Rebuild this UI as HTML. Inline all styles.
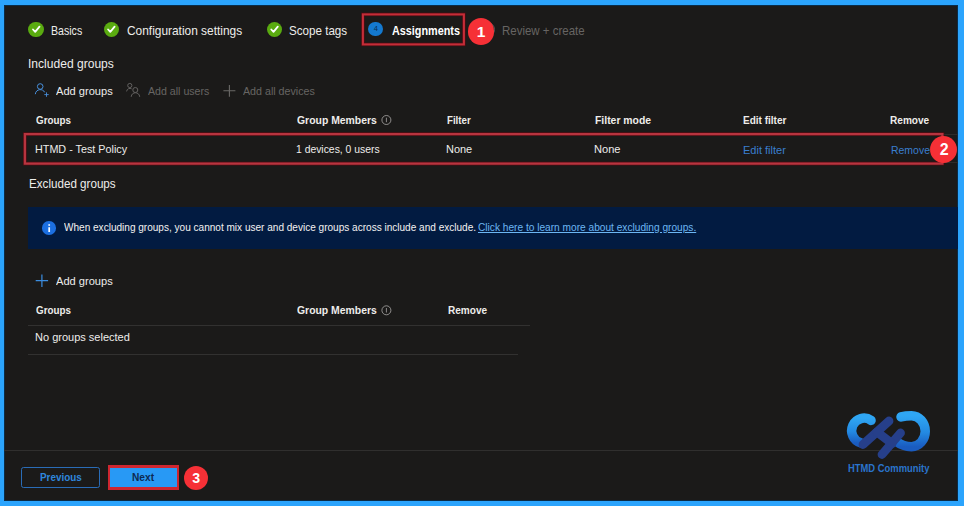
<!DOCTYPE html>
<html><head><meta charset="utf-8">
<style>
html,body{margin:0;padding:0;}
body{width:964px;height:506px;background:#2ba4fd;position:relative;overflow:hidden;font-family:"Liberation Sans",sans-serif;color:#fff;}
#p{position:absolute;left:4px;top:5px;width:954px;height:496px;background:#1b1a19;box-shadow:inset 0 0 0 1px #0a2c48;}
.t{position:absolute;white-space:nowrap;line-height:16px;transform-origin:0 0;}
.ck{position:absolute;width:15.2px;height:15.2px;border-radius:50%;background:#5aab10;}
.rc{position:absolute;border-radius:50%;background:#f63036;color:#fff;font-weight:bold;font-size:14.5px;text-align:center;}
.rb{position:absolute;border:2px solid #d9212d;box-sizing:border-box;}
.hl{position:absolute;height:1px;background:#323130;}
svg{position:absolute;overflow:visible;}
</style></head><body>
<div id="p"></div>

<!-- step checks -->
<div class="ck" style="left:28.4px;top:21.6px"></div>
<div class="ck" style="left:103.5px;top:21.6px"></div>
<div class="ck" style="left:266.7px;top:21.6px"></div>
<svg style="left:0;top:0" width="964" height="506" viewBox="0 0 964 506">
 <g fill="none" stroke="#fff" stroke-width="1.8" stroke-linecap="round" stroke-linejoin="round">
  <path d="M33 29.5 L35.2 31.8 L39.5 26.7"/>
  <path d="M108.1 29.5 L110.3 31.8 L114.6 26.7"/>
  <path d="M271.3 29.5 L273.5 31.8 L277.8 26.7"/>
 </g>
 <!-- add person icon -->
 <g fill="none" stroke="#4890dc" stroke-width="1">
  <circle cx="40.2" cy="86.5" r="2.8"/>
  <path d="M35.3 94.2 C35.8 88.6 43.2 88.4 44.6 92.3"/>
  <path d="M46.5 92.4 V96.8 M44.3 94.6 H48.7" stroke-width="0.9"/>
 </g>
 <!-- users icon -->
 <g fill="none" stroke="#636160" stroke-width="1">
  <circle cx="129.8" cy="85.5" r="2.1"/>
  <path d="M126.6 91.4 C126.9 88.6 129.8 87.8 131.6 88.8"/>
  <circle cx="135.3" cy="90" r="2.5"/>
  <path d="M131.2 96.8 C131.6 91.4 139.3 91.4 139.7 96.8"/>
 </g>
 <!-- plus gray -->
 <path d="M229.4 84.9 V96.8 M223.4 90.8 H235.4" stroke="#6a6866" stroke-width="1.1" fill="none"/>
 <!-- plus blue -->
 <path d="M41.9 274.5 V286.9 M35.7 280.7 H48.1" stroke="#3b8de0" stroke-width="1.2" fill="none"/>
 <!-- info outlined -->
 <g fill="none" stroke="#b4b2b0" stroke-width="0.75">
  <circle cx="386.4" cy="120" r="4.5"/><path d="M386.4 117.7 V122.2"/>
  <circle cx="386.4" cy="310.3" r="4.5"/><path d="M386.4 308 V312.5"/>
 </g>
</svg>

<!-- assignments step -->
<svg style="left:0;top:0" width="964" height="506" viewBox="0 0 964 506"><rect x="362.9" y="14.4" width="101" height="30" fill="none" stroke="#4a0d12" stroke-width="3.6"/><rect x="362.9" y="14.4" width="101" height="30" fill="none" stroke="#c42d38" stroke-width="2.1"/></svg>
<div style="position:absolute;left:368.4px;top:21.5px;width:14.8px;height:14.8px;border-radius:50%;background:#1479cf;color:#0a2d52;font-size:7.5px;line-height:14.8px;text-align:center">4</div>
<div style="position:absolute;left:479.7px;top:21.6px;width:15.2px;height:15.2px;border-radius:50%;border:1px solid #5c5a58;box-sizing:border-box"></div>
<div class="rc" style="left:467.6px;top:18px;width:26.8px;height:26.8px;line-height:27px;font-size:15.5px">1</div>

<!-- row highlight -->
<div class="hl" style="left:940px;top:134px;width:18px;background:#2c2b2a"></div>
<div class="hl" style="left:940px;top:162px;width:18px;background:#2c2b2a"></div>
<svg style="left:0;top:0" width="964" height="506" viewBox="0 0 964 506"><rect x="24.9" y="134.1" width="917.5" height="29.5" fill="none" stroke="#4a0d12" stroke-width="3.8"/><rect x="24.9" y="134.1" width="917.5" height="29.5" fill="none" stroke="#b8343f" stroke-width="2.3"/></svg>
<div class="rc" style="left:930.2px;top:136.1px;width:27.1px;height:27.1px;line-height:27.6px;font-size:16px;text-indent:0.8px">2</div>

<!-- banner -->
<div style="position:absolute;left:28.2px;top:206.8px;width:929.8px;height:42.4px;background:#021b41"></div>
<div style="position:absolute;left:42.4px;top:221.3px;width:13.6px;height:13.6px;border-radius:50%;background:#1c6fe0"></div>
<svg style="left:0;top:0" width="964" height="506" viewBox="0 0 964 506"><path d="M49.2 227.2 V232 M49.2 224.2 V225.8" stroke="#fff" stroke-width="1.7" fill="none"/></svg>

<div class="hl" style="left:28.2px;top:325px;width:501.6px"></div>
<div class="hl" style="left:28.2px;top:354px;width:489.4px"></div>
<div class="hl" style="left:4px;top:450px;width:954px;background:#302f2e"></div>

<!-- buttons -->
<div style="position:absolute;left:21.2px;top:467.1px;width:78.9px;height:20.7px;box-sizing:border-box;border:1px solid #2a6cb6;border-radius:2.5px"></div>
<div style="position:absolute;left:107.7px;top:464.8px;width:71.2px;height:24.9px;background:#cf2630"></div><div style="position:absolute;left:109.7px;top:467.6px;width:67px;height:19.7px;background:#2899f5"></div>
<div class="rc" style="left:184.05px;top:466.15px;width:24.3px;height:24.3px;line-height:24.8px;font-size:14.2px">3</div>

<!-- logo -->
<svg style="left:0;top:0" width="964" height="506" viewBox="0 0 964 506">
 <defs>
  <linearGradient id="g1" x1="0" y1="0" x2="0" y2="1"><stop offset="0" stop-color="#2fa6f4"/><stop offset="0.55" stop-color="#2389e2"/><stop offset="1" stop-color="#1a5cc0"/></linearGradient>
 </defs>
 <path d="M871.05 420.42 A12.3 12.6 0 1 0 860.8 442.9" fill="none" stroke="url(#g1)" stroke-width="9.5" stroke-linecap="round"/>
 <path d="M901 416.9 C905 415.9 908 415.75 911.5 415.75 A13.75 15.45 0 0 1 911.5 446.65 Q903 446.5 897 442" fill="none" stroke="url(#g1)" stroke-width="9.5" stroke-linecap="round"/>
 <g stroke="#263f8a" stroke-width="8.8" stroke-linecap="round" fill="none">
  <path d="M889 421 L863 444.6"/>
  <path d="M900.5 433 L882 454.5"/>
  <path d="M877 432 L892 443.5"/>
 </g>
</svg>

<div class="t" style="left:51.06px;top:22.73px;font-size:12.6px;color:#eeedeb;transform:scaleX(0.8417);">Basics</div>
<div class="t" style="left:127.00px;top:22.73px;font-size:12.6px;color:#eeedeb;transform:scaleX(0.9451);">Configuration settings</div>
<div class="t" style="left:288.98px;top:22.73px;font-size:12.6px;color:#eeedeb;transform:scaleX(0.9226);">Scope tags</div>
<div class="t" style="left:391.90px;top:22.84px;font-size:12.3px;font-weight:bold;color:#ffffff;transform:scaleX(0.8805);">Assignments</div>
<div class="t" style="left:502.29px;top:22.73px;font-size:12.6px;color:#676563;transform:scaleX(0.9122);">Review + create</div>
<div class="t" style="left:28.04px;top:55.77px;font-size:12.5px;color:#eeedeb;transform:scaleX(0.9648);">Included groups</div>
<div class="t" style="left:56.10px;top:83.36px;font-size:10.8px;color:#eeedeb;transform:scaleX(1.0273);">Add groups</div>
<div class="t" style="left:147.50px;top:83.36px;font-size:10.8px;color:#676563;transform:scaleX(0.9823);">Add all users</div>
<div class="t" style="left:243.10px;top:83.36px;font-size:10.8px;color:#676563;transform:scaleX(0.9890);">Add all devices</div>
<div class="t" style="left:35.70px;top:112.63px;font-size:10px;font-weight:bold;color:#eeedeb;transform:scaleX(0.9806);">Groups</div>
<div class="t" style="left:296.60px;top:112.63px;font-size:10px;font-weight:bold;color:#eeedeb;transform:scaleX(1.0416);">Group Members</div>
<div class="t" style="left:447.40px;top:112.63px;font-size:10px;font-weight:bold;color:#eeedeb;transform:scaleX(0.9680);">Filter</div>
<div class="t" style="left:594.80px;top:112.63px;font-size:10px;font-weight:bold;color:#eeedeb;transform:scaleX(1.0407);">Filter mode</div>
<div class="t" style="left:743.40px;top:112.63px;font-size:10px;font-weight:bold;color:#eeedeb;transform:scaleX(1.0023);">Edit filter</div>
<div class="t" style="left:890.30px;top:112.63px;font-size:10px;font-weight:bold;color:#eeedeb;transform:scaleX(1.0077);">Remove</div>
<div class="t" style="left:34.80px;top:141.36px;font-size:10.8px;color:#eeedeb;transform:scaleX(0.9989);">HTMD - Test Policy</div>
<div class="t" style="left:296.14px;top:141.36px;font-size:10.8px;color:#eeedeb;transform:scaleX(0.9605);">1 devices, 0 users</div>
<div class="t" style="left:446.38px;top:141.36px;font-size:10.8px;color:#eeedeb;transform:scaleX(1.0160);">None</div>
<div class="t" style="left:593.78px;top:141.36px;font-size:10.8px;color:#eeedeb;transform:scaleX(1.0240);">None</div>
<div class="t" style="left:743.40px;top:142.53px;font-size:10.3px;color:#3a7fcf;transform:scaleX(1.0700);">Edit filter</div>
<div class="t" style="left:890.80px;top:142.53px;font-size:10.3px;color:#3a7fcf;transform:scaleX(1.0158);">Remove</div>
<div class="t" style="left:28.57px;top:175.77px;font-size:12.5px;color:#eeedeb;transform:scaleX(0.9304);">Excluded groups</div>
<div class="t" style="left:63.60px;top:219.63px;font-size:10px;color:#f3f2f1;transform:scaleX(1.0044);">When excluding groups, you cannot mix user and device groups across include and exclude.</div>
<div class="t" style="left:478.30px;top:219.63px;font-size:10px;color:#6cb6f3;transform:scaleX(1.0144);text-decoration:underline;">Click here to learn more about excluding groups.</div>
<div class="t" style="left:56.10px;top:273.36px;font-size:10.8px;color:#eeedeb;transform:scaleX(1.0273);">Add groups</div>
<div class="t" style="left:35.70px;top:302.64px;font-size:10px;font-weight:bold;color:#eeedeb;transform:scaleX(0.9806);">Groups</div>
<div class="t" style="left:296.60px;top:302.64px;font-size:10px;font-weight:bold;color:#eeedeb;transform:scaleX(1.0403);">Group Members</div>
<div class="t" style="left:447.60px;top:302.64px;font-size:10px;font-weight:bold;color:#eeedeb;transform:scaleX(1.0051);">Remove</div>
<div class="t" style="left:34.68px;top:329.36px;font-size:10.8px;color:#eeedeb;transform:scaleX(1.0196);">No groups selected</div>
<div class="t" style="left:39.80px;top:469.64px;font-size:10px;font-weight:bold;color:#2f86dc;transform:scaleX(0.9905);">Previous</div>
<div class="t" style="left:131.90px;top:469.64px;font-size:10px;font-weight:bold;color:#0e2a52;transform:scaleX(1.0182);">Next</div>
<div class="t" style="left:847.90px;top:460.64px;font-size:10px;font-weight:bold;color:#2a74cc;transform:scaleX(0.9402);">HTMD Community</div>
</body></html>
